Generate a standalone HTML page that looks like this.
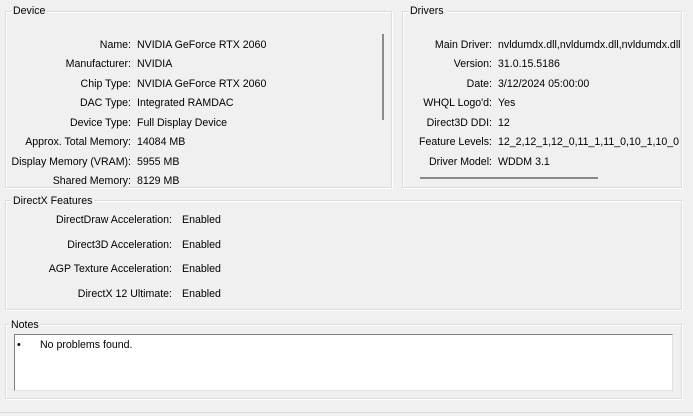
<!DOCTYPE html>
<html><head><style>
body{margin:0;width:693px;height:416px;background:#f0f0f0;font-family:"Liberation Sans",sans-serif;font-size:10.6px;color:#000;position:relative;overflow:hidden}
.g{position:absolute;border:1px solid #dcdcdc;box-shadow:inset 1px 1px 0 #fff,1px 1px 0 #fff}
.t{position:absolute;background:#f0f0f0;padding:0 2px;line-height:13px}
.l,.v{position:absolute;line-height:14px;white-space:nowrap}
.l{text-align:right}
</style></head><body>
<div class="g" style="left:5px;top:11px;width:385px;height:175px"></div>
<div class="t" style="left:11px;top:5px">Device</div>
<div style="position:absolute;left:382px;top:34px;width:2px;height:86px;background:#8a8a8a"></div>
<div class="g" style="left:402px;top:11px;width:278px;height:175px"></div>
<div class="t" style="left:408px;top:5px">Drivers</div>
<div style="position:absolute;left:420px;top:177px;width:178px;height:2px;background:#8a8a8a"></div>
<div class="g" style="left:5px;top:200px;width:675px;height:108px"></div>
<div class="t" style="left:11px;top:195px">DirectX Features</div>
<div class="g" style="left:5px;top:324px;width:675px;height:73px"></div>
<div class="t" style="left:9px;top:319px">Notes</div>
<div style="position:absolute;left:14px;top:334px;width:657px;height:55px;background:#fff;border-top:1px solid #808080;border-left:1px solid #808080;border-right:1px solid #e0e0e0;border-bottom:1px solid #e0e0e0"></div>
<div class="v" style="left:17px;top:338px">•</div>
<div class="v" style="left:40px;top:338px">No problems found.</div>
<div style="position:absolute;left:0;top:412px;width:693px;height:1px;background:#dcdcdc"></div>

<div class="l" style="right:562px;top:38px">Name:</div><div class="v" style="left:137px;top:38px">NVIDIA GeForce RTX 2060</div>
<div class="l" style="right:562px;top:57px">Manufacturer:</div><div class="v" style="left:137px;top:57px">NVIDIA</div>
<div class="l" style="right:562px;top:77px">Chip Type:</div><div class="v" style="left:137px;top:77px">NVIDIA GeForce RTX 2060</div>
<div class="l" style="right:562px;top:96px">DAC Type:</div><div class="v" style="left:137px;top:96px">Integrated RAMDAC</div>
<div class="l" style="right:562px;top:116px">Device Type:</div><div class="v" style="left:137px;top:116px">Full Display Device</div>
<div class="l" style="right:562px;top:135px">Approx. Total Memory:</div><div class="v" style="left:137px;top:135px">14084 MB</div>
<div class="l" style="right:562px;top:155px">Display Memory (VRAM):</div><div class="v" style="left:137px;top:155px">5955 MB</div>
<div class="l" style="right:562px;top:174px">Shared Memory:</div><div class="v" style="left:137px;top:174px">8129 MB</div>

<div class="l" style="right:201px;top:38px">Main Driver:</div>
<div style="position:absolute;left:498px;top:38px;width:182px;overflow:hidden;white-space:nowrap;line-height:14px">nvldumdx.dll,nvldumdx.dll,nvldumdx.dll</div>
<div class="l" style="right:201px;top:57px">Version:</div><div class="v" style="left:498px;top:57px">31.0.15.5186</div>
<div class="l" style="right:201px;top:77px">Date:</div><div class="v" style="left:498px;top:77px">3/12/2024 05:00:00</div>
<div class="l" style="right:201px;top:96px">WHQL Logo'd:</div><div class="v" style="left:498px;top:96px">Yes</div>
<div class="l" style="right:201px;top:116px">Direct3D DDI:</div><div class="v" style="left:498px;top:116px">12</div>
<div class="l" style="right:201px;top:135px">Feature Levels:</div>
<div style="position:absolute;left:498px;top:135px;width:182px;overflow:hidden;white-space:nowrap;line-height:14px">12_2,12_1,12_0,11_1,11_0,10_1,10_0</div>
<div class="l" style="right:201px;top:155px">Driver Model:</div><div class="v" style="left:498px;top:155px">WDDM 3.1</div>

<div class="l" style="right:521px;top:213px">DirectDraw Acceleration:</div><div class="v" style="left:182px;top:213px">Enabled</div>
<div class="l" style="right:521px;top:238px">Direct3D Acceleration:</div><div class="v" style="left:182px;top:238px">Enabled</div>
<div class="l" style="right:521px;top:262px">AGP Texture Acceleration:</div><div class="v" style="left:182px;top:262px">Enabled</div>
<div class="l" style="right:521px;top:287px">DirectX 12 Ultimate:</div><div class="v" style="left:182px;top:287px">Enabled</div>
</body></html>
